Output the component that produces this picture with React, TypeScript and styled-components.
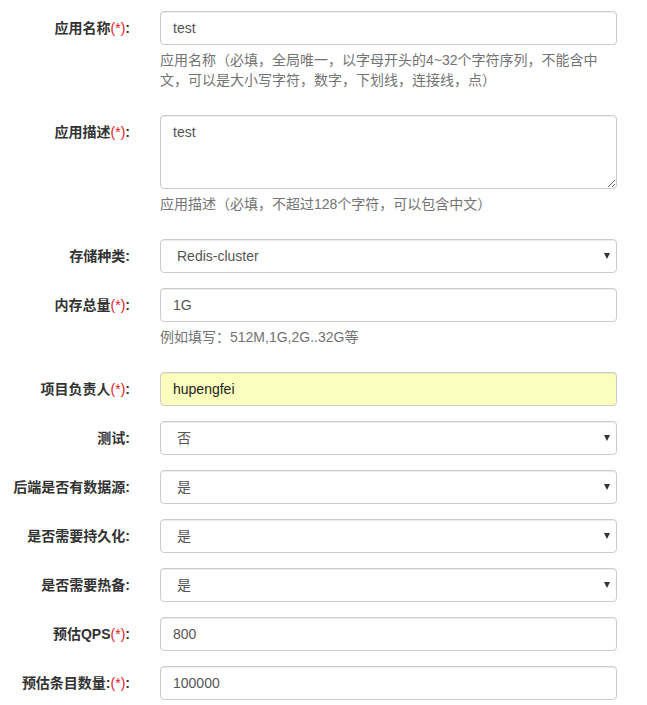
import React from 'react';
import styled, {createGlobalStyle} from 'styled-components';

const GlobalStyle = createGlobalStyle`
  html, body {
    margin: 0;
    padding: 0;
    background: #fff;
  }
  body {
    font-family: "Liberation Sans", Arial, "Noto Sans CJK SC", sans-serif;
    font-size: 14px;
    line-height: 20px;
    color: #333;
  }
`;

interface Field {
  label: string;
  required?: boolean;
  kind: 'input' | 'textarea' | 'select';
  value: string;
  help?: string;
  autofill?: boolean;
}

const fields: Field[] = [
  {
    label: '应用名称',
    required: true,
    kind: 'input',
    value: 'test',
    help: '应用名称（必填，全局唯一，以字母开头的4~32个字符序列，不能含中文，可以是大小写字符，数字，下划线，连接线，点）',
  },
  {label: '应用描述', required: true, kind: 'textarea', value: 'test', help: '应用描述（必填，不超过128个字符，可以包含中文）'},
  {label: '存储种类', kind: 'select', value: 'Redis-cluster'},
  {label: '内存总量', required: true, kind: 'input', value: '1G', help: '例如填写：512M,1G,2G..32G等'},
  {label: '项目负责人', required: true, kind: 'input', value: 'hupengfei', autofill: true},
  {label: '测试', kind: 'select', value: '否'},
  {label: '后端是否有数据源', kind: 'select', value: '是'},
  {label: '是否需要持久化', kind: 'select', value: '是'},
  {label: '是否需要热备', kind: 'select', value: '是'},
  {label: '预估QPS', required: true, kind: 'input', value: '800'},
  {label: '预估条目数量:', required: true, kind: 'input', value: '100000'},
];

export default function App() {
  return (
    <>
      <GlobalStyle />
      <Form onSubmit={e => e.preventDefault()}>
        {fields.map(f => (
          <FormGroup key={f.label}>
            <ControlLabel>
              {f.label}
              {f.required && <Required>(*)</Required>}:
            </ControlLabel>
            <ControlCol>
              {f.kind === 'input' && <TextInput defaultValue={f.value} $autofill={f.autofill} />}
              {f.kind === 'textarea' && <TextArea rows={3} defaultValue={f.value} />}
              {f.kind === 'select' && (
                <SelectWrap>
                  <Select defaultValue={f.value}>
                    <option>{f.value}</option>
                  </Select>
                  <Caret />
                </SelectWrap>
              )}
              {f.help && <HelpBlock>{f.help}</HelpBlock>}
            </ControlCol>
          </FormGroup>
        ))}
      </Form>
    </>
  );
}

const Form = styled.form`
  padding: 11px 15px 0 0;
  width: 647px;
  box-sizing: border-box;
`;

const FormGroup = styled.div`
  display: grid;
  grid-template-columns: 145px 1fr;
  margin-bottom: 15px;
`;

const ControlLabel = styled.label`
  padding: 7px 15px 0 0;
  text-align: right;
  font-weight: bold;
  color: #333;
  white-space: nowrap;
`;

const Required = styled.span`
  color: #e4161f;
  font-weight: normal;
`;

const ControlCol = styled.div`
  padding: 0 15px;
  min-width: 0;
`;

const controlBase = `
  display: block;
  width: 100%;
  box-sizing: border-box;
  margin: 0;
  padding: 6px 12px;
  font-family: "Liberation Sans", Arial, "Noto Sans CJK SC", sans-serif;
  font-size: 14px;
  line-height: 20px;
  color: #555;
  background: #fff;
  border: 1px solid #ccc;
  border-radius: 4px;
  box-shadow: inset 0 1px 1px rgba(0, 0, 0, 0.075);
  outline: none;
`;

const TextInput = styled.input<{$autofill?: boolean}>`
  ${controlBase}
  height: 34px;
  background: ${p => (p.$autofill ? '#faffbd' : '#fff')};
  color: ${p => (p.$autofill ? '#222' : '#555')};
`;

const TextArea = styled.textarea`
  ${controlBase}
  height: 74px;
  resize: vertical;
`;

const SelectWrap = styled.div`
  position: relative;
`;

const Select = styled.select`
  ${controlBase}
  height: 34px;
  padding-left: 16px;
  appearance: none;
  -webkit-appearance: none;
`;

const Caret = styled.span`
  position: absolute;
  right: 7px;
  top: 14px;
  width: 0;
  height: 0;
  border-left: 3px solid transparent;
  border-right: 3px solid transparent;
  border-top: 6px solid #333;
  pointer-events: none;
`;

const HelpBlock = styled.span`
  display: block;
  margin: 5px 0 10px;
  color: #737373;
`;
